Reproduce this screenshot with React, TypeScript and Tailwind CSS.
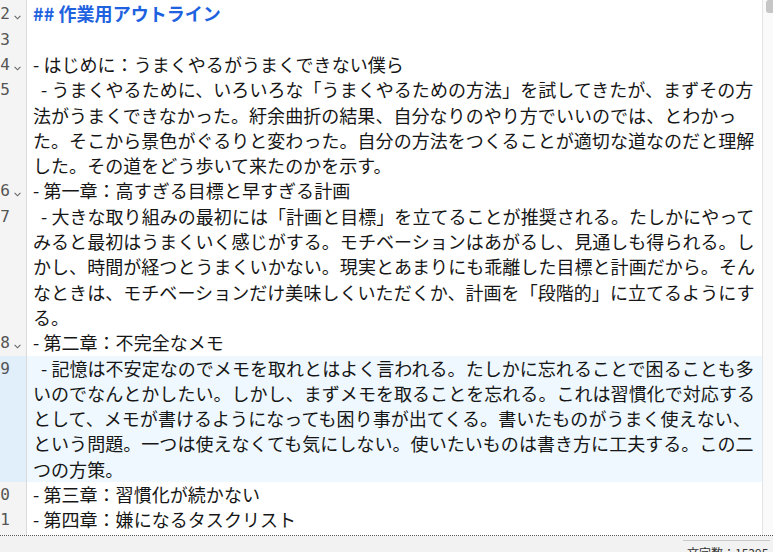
type Line = {
  n: number;
  fold?: boolean;
  heading?: boolean;
  indent?: boolean;
  active?: boolean;
  rows: string[];
};

const LINES: Line[] = [
  { n: 12, fold: true, heading: true, rows: ['## 作業用アウトライン'] },
  { n: 13, rows: [''] },
  { n: 14, fold: true, rows: ['- はじめに：うまくやるがうまくできない僕ら'] },
  {
    n: 15,
    indent: true,
    rows: [
      '- うまくやるために、いろいろな「うまくやるための方法」を試してきたが、まずその方',
      '法がうまくできなかった。紆余曲折の結果、自分なりのやり方でいいのでは、とわかっ',
      'た。そこから景色がぐるりと変わった。自分の方法をつくることが適切な道なのだと理解',
      'した。その道をどう歩いて来たのかを示す。',
    ],
  },
  { n: 16, fold: true, rows: ['- 第一章：高すぎる目標と早すぎる計画'] },
  {
    n: 17,
    indent: true,
    rows: [
      '- 大きな取り組みの最初には「計画と目標」を立てることが推奨される。たしかにやって',
      'みると最初はうまくいく感じがする。モチベーションはあがるし、見通しも得られる。し',
      'かし、時間が経つとうまくいかない。現実とあまりにも乖離した目標と計画だから。そん',
      'なときは、モチベーションだけ美味しくいただくか、計画を「段階的」に立てるようにす',
      'る。',
    ],
  },
  { n: 18, fold: true, rows: ['- 第二章：不完全なメモ'] },
  {
    n: 19,
    indent: true,
    active: true,
    rows: [
      '- 記憶は不安定なのでメモを取れとはよく言われる。たしかに忘れることで困ることも多',
      'いのでなんとかしたい。しかし、まずメモを取ることを忘れる。これは習慣化で対応する',
      'として、メモが書けるようになっても困り事が出てくる。書いたものがうまく使えない、',
      'という問題。一つは使えなくても気にしない。使いたいものは書き方に工夫する。この二',
      'つの方策。',
    ],
  },
  { n: 20, rows: ['- 第三章：習慣化が続かない'] },
  { n: 21, rows: ['- 第四章：嫌になるタスクリスト'] },
];

function Chevron() {
  return (
    <svg width="7" height="5" viewBox="0 0 7 5" fill="none" className="mt-[14px] ml-[4px]">
      <path d="M0.6 0.8 L3.5 3.8 L6.4 0.8" stroke="#666" strokeWidth="1.1" />
    </svg>
  );
}

function EditorLine({ line }: { line: Line }) {
  return (
    <div className={`flex ${line.active ? 'bg-[#eef8fe]' : ''}`}>
      <div
        className={`w-[27px] shrink-0 flex overflow-hidden border-r border-[#dadada] ${
          line.active ? 'bg-[#e1effa]' : 'bg-[#f4f4f4]'
        }`}
      >
        <div className="w-[10px] shrink-0 flex justify-end overflow-visible">
          <span className="font-['DejaVu_Sans_Mono',monospace] text-[16px] leading-[25.3px] text-[#555] whitespace-nowrap">
            {line.n}
          </span>
        </div>
        {line.fold && <Chevron />}
      </div>
      <div className="flex-1 min-w-0 pl-[6px]">
        {line.rows.map((row, i) => (
          <div
            key={i}
            className={`h-[25.3px] whitespace-nowrap overflow-hidden ${
              line.heading ? 'font-bold text-[#1e62e0]' : 'text-[#161616]'
            } ${line.indent && i === 0 ? 'pl-[8px]' : ''}`}
          >
            {row}
          </div>
        ))}
      </div>
    </div>
  );
}

export default function App() {
  return (
    <div className="w-[773px] h-[552px] overflow-hidden flex flex-col bg-white font-['Noto_Sans_CJK_JP','Noto_Sans',sans-serif] text-[18px] leading-[25.3px] tracking-[0.05px]">
      <div className="h-[536px] shrink-0 flex border-b border-dotted border-[#555] overflow-hidden">
        <div className="flex-1 min-w-0 flex flex-col pt-[1.4px] bg-[linear-gradient(to_right,#f4f4f4_26px,#dadada_26px,#dadada_27px,transparent_27px)]">
          {LINES.map(line => (
            <EditorLine key={line.n} line={line} />
          ))}
        </div>
        <div className="w-[11px] shrink-0 border-l border-[#e4e4e4] bg-[#fafafa] flex justify-end">
          <div className="w-[7px] h-[13px] bg-[#c6c6c6] rounded-bl-[3px] rounded-tl-[3px]" />
        </div>
      </div>
      <div className="flex-1 bg-[#f2f2f2] flex justify-end pr-[3px]">
        <div className="w-[87px] mt-[4px] border-t border-[#c9c9c9] pt-[5px] pl-[4px] text-[12px] leading-[14px] tracking-normal text-[#333] whitespace-nowrap">
          文字数：15395
        </div>
      </div>
    </div>
  );
}
